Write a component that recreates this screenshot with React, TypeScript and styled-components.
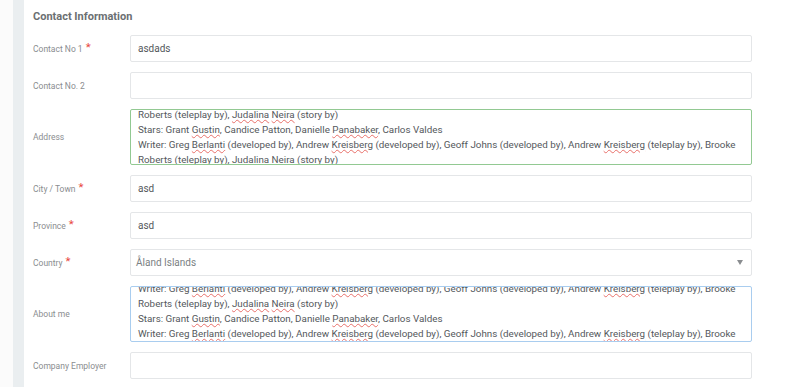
import React from "react";
import styled, { createGlobalStyle } from "styled-components";

const Global = createGlobalStyle`
  html, body { margin: 0; padding: 0; background: #fbfbfb; }
  body { font-family: Roboto, "Liberation Sans", Arial, sans-serif; }
  * { box-sizing: border-box; }
`;

const Page = styled.div`
  display: flex;
  width: 800px;
  height: 387px;
  overflow: hidden;
  padding-left: 13px;
  background: #fbfbfb;
`;

const Panel = styled.section`
  flex: 1;
  min-width: 0;
  background: #ffffff;
  border-left: 11px solid #eaeef0;
  padding: 7px 48px 0 9px;
  display: flex;
  flex-direction: column;
`;

const Heading = styled.h3`
  margin: 0 0 8px 0;
  font-size: 11px;
  line-height: 20px;
  font-weight: 700;
  color: #6b6f72;
`;

const Rows = styled.div`
  display: flex;
  flex-direction: column;
  gap: 10px;
`;

const Row = styled.div`
  display: flex;
  align-items: center;
`;

const Label = styled.label`
  width: 97px;
  flex: none;
  font-size: 8.5px;
  color: #8a8d90;
  display: flex;
  align-items: flex-start;
  gap: 3px;
`;

const Star = styled.span`
  color: #e8473e;
  font-size: 11.5px;
  line-height: 9px;
  margin-top: -1px;
`;

const Field = styled.div<{ $tone?: "green" | "blue" }>`
  flex: 1;
  min-width: 0;
  height: 27px;
  border: 1px solid
    ${(p) => (p.$tone === "green" ? "#92c992" : p.$tone === "blue" ? "#a9cdef" : "#e4e6e8")};
  border-radius: 2px;
  background: #fff;
  display: flex;
  align-items: center;
  padding: 0 7px;
  font-size: 10px;
  color: #54585c;
`;

const SelectField = styled(Field)`
  justify-content: space-between;
  padding: 0 8px 0 5px;
  color: #7b7f83;
`;

const Caret = styled.span`
  width: 0;
  height: 0;
  border-left: 3.5px solid transparent;
  border-right: 3.5px solid transparent;
  border-top: 5px solid #8a8d90;
`;

const AreaBox = styled.div<{ $tone: "green" | "blue" }>`
  flex: 1;
  min-width: 0;
  height: 56px;
  overflow: hidden;
  border: 1px solid ${(p) => (p.$tone === "green" ? "#92c992" : "#a9cdef")};
  border-radius: 2px;
  background: #fff;
  padding: 0 7px;
  font-size: 9.8px;
  line-height: 15px;
  color: #54585c;
`;

const AreaText = styled.div<{ $shift: number }>`
  margin-top: ${(p) => p.$shift}px;
  white-space: nowrap;
`;

const Miss = styled.span`
  text-decoration: underline wavy #e8706a;
  text-decoration-thickness: 1px;
  text-underline-offset: 1px;
`;

const LineRoberts = () => (
  <div>
    Roberts (teleplay by), <Miss>Judalina</Miss> <Miss>Neira</Miss> (story by)
  </div>
);
const LineStars = () => (
  <div>
    Stars: Grant <Miss>Gustin</Miss>, Candice Patton, Danielle <Miss>Panabaker</Miss>, Carlos Valdes
  </div>
);
const LineWriter = () => (
  <div>
    Writer: Greg <Miss>Berlanti</Miss> (developed by), Andrew <Miss>Kreisberg</Miss> (developed by), Geoff
    Johns (developed by), Andrew <Miss>Kreisberg</Miss> (teleplay by), Brooke
  </div>
);

export default function App() {
  return (
    <>
      <Global />
      <Page>
        <Panel>
          <Heading>Contact Information</Heading>
          <Rows>
            <Row>
              <Label>
                Contact No 1 <Star>*</Star>
              </Label>
              <Field>asdads</Field>
            </Row>
            <Row>
              <Label>Contact No. 2</Label>
              <Field />
            </Row>
            <Row>
              <Label>Address</Label>
              <AreaBox $tone="green">
                <AreaText $shift={-3}>
                  <LineRoberts />
                  <LineStars />
                  <LineWriter />
                  <LineRoberts />
                </AreaText>
              </AreaBox>
            </Row>
            <Row>
              <Label>
                City / Town <Star>*</Star>
              </Label>
              <Field>asd</Field>
            </Row>
            <Row>
              <Label>
                Province <Star>*</Star>
              </Label>
              <Field>asd</Field>
            </Row>
            <Row>
              <Label>
                Country <Star>*</Star>
              </Label>
              <SelectField>
                <span>Åland Islands</span>
                <Caret />
              </SelectField>
            </Row>
            <Row>
              <Label>About me</Label>
              <AreaBox $tone="blue">
                <AreaText $shift={-6}>
                  <LineWriter />
                  <LineRoberts />
                  <LineStars />
                  <LineWriter />
                </AreaText>
              </AreaBox>
            </Row>
            <Row>
              <Label>Company Employer</Label>
              <Field />
            </Row>
          </Rows>
        </Panel>
      </Page>
    </>
  );
}
